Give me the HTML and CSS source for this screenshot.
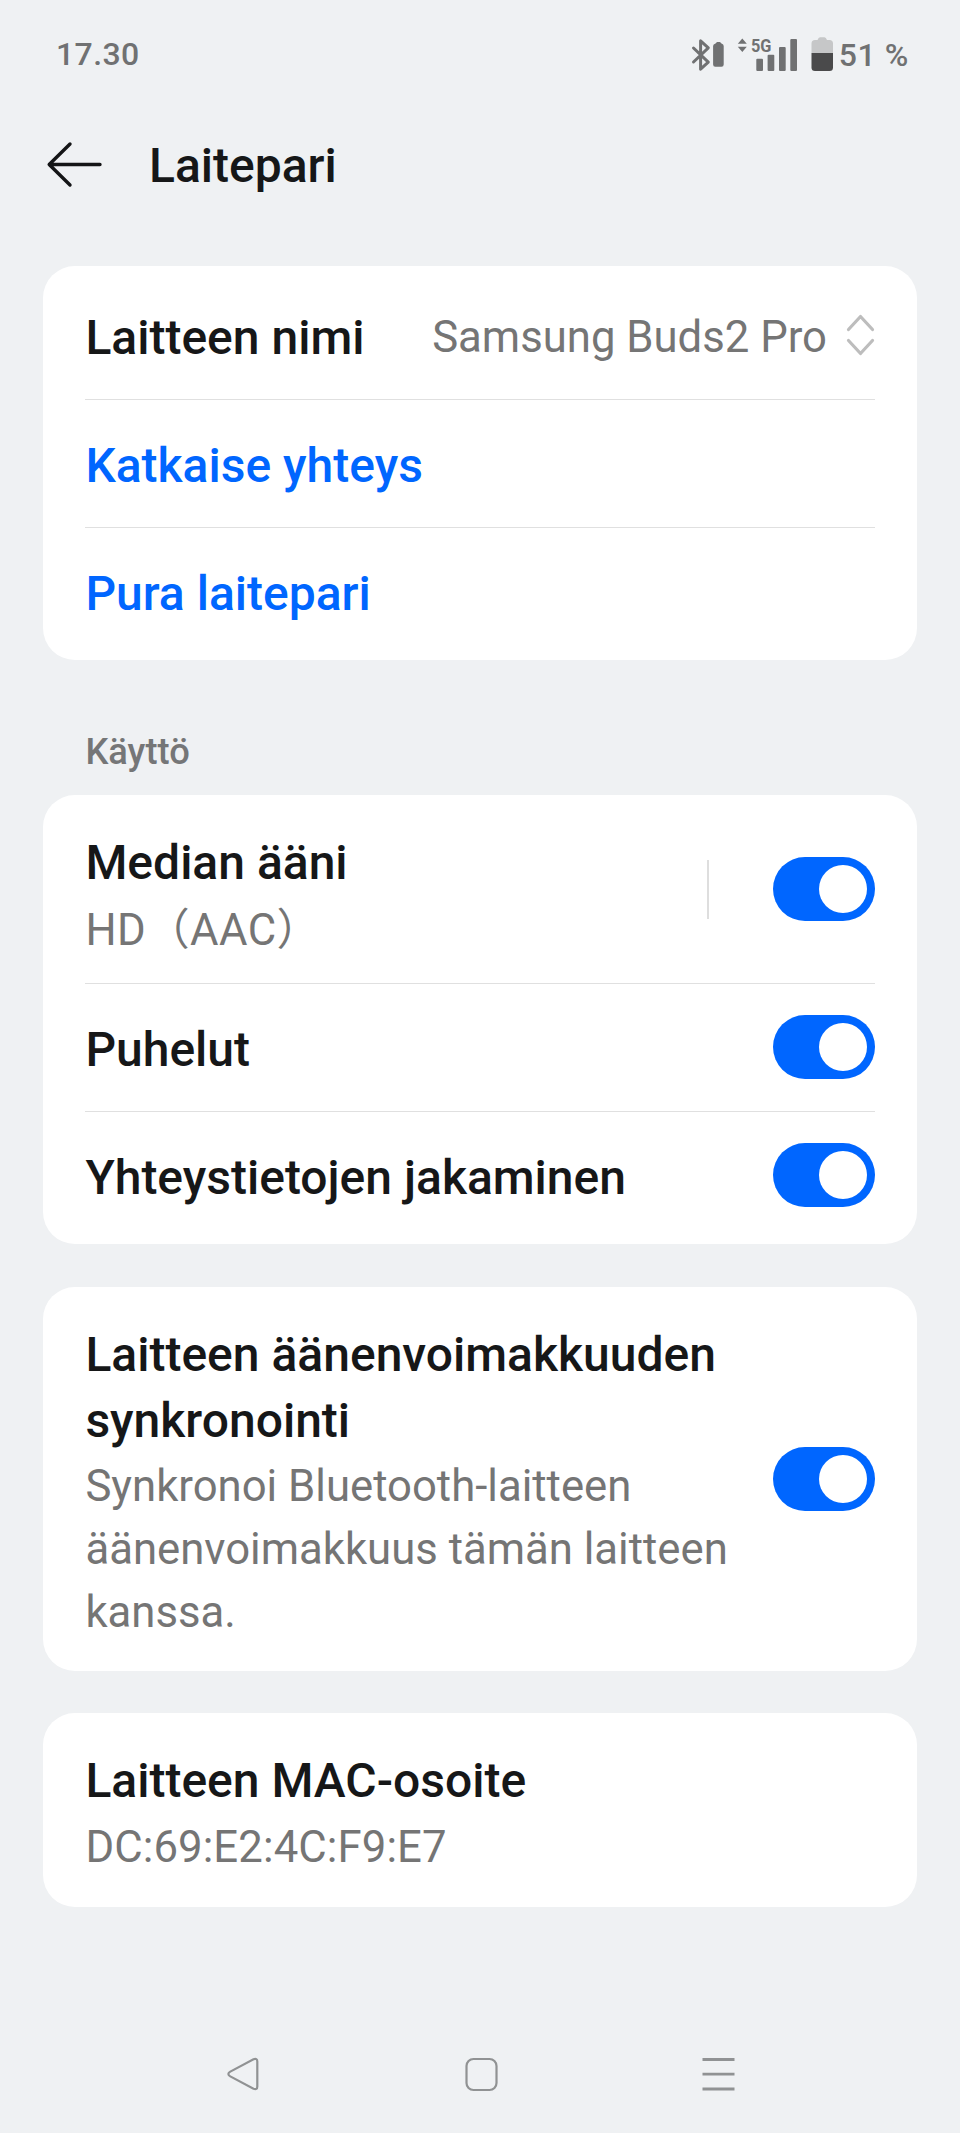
FILE: index.html
```html
<!DOCTYPE html>
<html lang="fi">
<head>
  <meta charset="UTF-8">
  <meta name="viewport" content="width=device-width, initial-scale=1.0">
  <title>Laitepari</title>
  <link rel="stylesheet" href="styles.css">
</head>
<body>
  <div class="status-bar">
    <span class="time">17.30</span>
    <div class="status-right">
      <svg class="status-icons" width="144" height="44" viewBox="690 32 144 44">
        <!-- bluetooth + device battery -->
        <path d="M693.5 48L708.300 62.200L700.600 69.200V40.800L708.300 47.800L693.500 62" fill="none" stroke="#707172" stroke-width="3" stroke-linejoin="round" stroke-linecap="round"/>
        <path d="M715.5 43.5L717 42H720L721.500 43.500Q723.700 44 723.700 46V64.500Q723.700 66.700 721.500 66.700H715.300Q713.100 66.700 713.100 64.500V46Q713.100 44 715.500 43.500Z" fill="#707172"/>
        <!-- mobile network -->
        <path d="M742.300 38.500L746.800 43.800H737.800ZM742.300 52L746.800 46.700H737.800Z" fill="#707172"/>
        <text class="net" x="751" y="52.300" textLength="20.500" lengthAdjust="spacingAndGlyphs">5G</text>
        <g fill="#707172">
          <rect x="756.300" y="58.700" width="6.700" height="12.300" rx="1"/>
          <rect x="767.600" y="54.700" width="6.700" height="16.300" rx="1"/>
          <rect x="779" y="47" width="6.700" height="24" rx="1"/>
          <rect x="790.300" y="39" width="6.700" height="32" rx="1"/>
        </g>
        <!-- phone battery -->
        <path d="M811.500 53V43.500Q811.500 40 815 40H817.500Q818.500 37.300 820 37.300H824.500Q826 37.300 827 40H829.500Q833 40 833 43.500V53Z" fill="#c6c7c8"/>
        <path d="M811.500 53H833V67.500Q833 71 829.500 71H815Q811.500 71 811.500 67.500Z" fill="#4a4a4b"/>
      </svg>
      <span class="percent">51 %</span>
    </div>
  </div>

  <header class="header">
    <svg width="56" height="48" viewBox="0 0 56 48" fill="none" stroke="#141516" stroke-width="3.400" stroke-linecap="round" stroke-linejoin="round">
      <path d="M24 4L3.200 24.500L24 45M3.200 24.500H54"/>
    </svg>
    <h1>Laitepari</h1>
  </header>

  <main>
    <section class="card list">
      <div class="row">
        <span class="title">Laitteen nimi</span>
        <div class="value">
          <span>Samsung Buds2 Pro</span>
          <svg width="29" height="42" viewBox="0 0 29 42" fill="none" stroke="#bdbdbd" stroke-width="3.200" stroke-linecap="round" stroke-linejoin="round">
            <path d="M2.500 15.500L14.500 2.500L26.500 15.500M2.500 26.500L14.500 39.500L26.500 26.500"/>
          </svg>
        </div>
      </div>
      <div class="row"><a class="title link">Katkaise yhteys</a></div>
      <div class="row"><a class="title link">Pura laitepari</a></div>
    </section>

    <h2>Käyttö</h2>

    <section class="card usage">
      <div class="row tall">
        <div class="text">
          <p class="name">Median ääni</p>
          <p class="desc">HD（AAC）</p>
        </div>
        <div class="controls">
          <span class="separator"></span>
          <span class="switch"></span>
        </div>
      </div>
      <div class="row">
        <span class="title">Puhelut</span>
        <span class="switch"></span>
      </div>
      <div class="row">
        <span class="title">Yhteystietojen jakaminen</span>
        <span class="switch"></span>
      </div>
    </section>

    <section class="card sync">
      <div class="text">
        <p class="name">Laitteen äänenvoimakkuuden synkronointi</p>
        <p class="desc">Synkronoi Bluetooth-laitteen äänenvoimakkuus tämän laitteen kanssa.</p>
      </div>
      <span class="switch"></span>
    </section>

    <section class="card mac">
      <div class="text">
        <p class="name">Laitteen MAC-osoite</p>
        <p class="desc">DC:69:E2:4C:F9:E7</p>
      </div>
    </section>
  </main>

  <nav class="nav-bar">
    <svg width="34" height="36" viewBox="0 0 34 36">
      <path d="M3.300 15.600L26.500 3.200Q30.300 1.800 30.300 5.500V30.500Q30.300 34.200 26.500 32.800L3.300 20.400Q-0.600 18 3.300 15.600Z"/>
    </svg>
    <svg width="34" height="36" viewBox="0 0 34 36">
      <rect x="2.500" y="3" width="30" height="31" rx="7"/>
    </svg>
    <svg width="34" height="36" viewBox="0 0 34 36" class="menu">
      <path d="M1.500 3.500H33.500M1.500 18.200H33.500M1.500 33H33.500"/>
    </svg>
  </nav>
</body>
</html>
```
FILE: styles.css
```css
* {
  box-sizing: border-box;
}
body {
  margin: 0;
  height: 2133px;
  display: flex;
  flex-direction: column;
  background: #eff1f3;
  color: #161718;
  font-family: Roboto, "Noto Sans CJK SC", sans-serif;
}
h1, h2, p {
  margin: 0;
  font-weight: 500;
}
svg {
  display: block;
  flex: none;
}

/* status bar */
.status-bar {
  height: 108px;
  padding: 0 51px 0 56px;
  display: flex;
  justify-content: space-between;
  align-items: center;
  color: #707172;
  font-size: 32px;
  font-weight: 500;
}
.time {
  letter-spacing: 0.4px;
}
.status-right {
  display: flex;
  align-items: center;
  gap: 5px;
}
.percent {
  letter-spacing: 0.6px;
  padding-top: 2px;
}
.net {
  font-size: 19px;
  font-weight: 700;
  fill: #707172;
}

/* header */
.header {
  height: 158px;
  padding: 31px 0 0 46px;
  display: flex;
  align-items: flex-start;
  gap: 47px;
}
.header svg {
  margin-top: 1px;
}
h1 {
  font-size: 48px;
  line-height: 54px;
}

/* cards */
main {
  padding: 0 43px;
}
.card {
  background: #fff;
  border-radius: 32px;
  padding: 0 42px 0 42.400px;
}
.list {
  height: 394px;
  padding-top: 5px;
}
.row {
  height: 128px;
  display: flex;
  justify-content: space-between;
  align-items: center;
  border-bottom: 1px solid #e0e0e0;
}
.list .row:first-child {
  height: 129px;
}
.row:last-child {
  height: 127px;
  border-bottom: none;
}
.title {
  font-size: 48px;
  font-weight: 500;
  padding-top: 3px;
}
.list .row:first-child .title {
  padding-top: 5px;
}
.link {
  color: #0066ff;
}
.value {
  display: flex;
  align-items: center;
  gap: 19px;
  color: #757575;
  font-size: 43.700px;
}
.value span {
  padding-top: 3px;
}
h2 {
  color: #757677;
  font-size: 36.300px;
  line-height: 42px;
  padding: 71px 0 22px 42.400px;
}
.usage {
  height: 449px;
}
.row.tall {
  height: 189px;
}
.usage .row:not(.tall) .switch {
  margin-bottom: 1px;
}
.name {
  font-size: 48px;
  line-height: 65.700px;
}
.desc {
  margin-top: 2px;
  color: #757575;
  font-size: 43.700px;
  font-weight: 400;
  line-height: 63px;
}
.row .desc {
  margin-top: 4px;
  letter-spacing: 0.400px;
}
.mac .desc {
  letter-spacing: 0.100px;
}
.controls {
  display: flex;
  align-items: center;
  gap: 64px;
}
.separator {
  width: 2px;
  height: 59px;
  background: #dedede;
}
.switch {
  flex: none;
  width: 102px;
  height: 64px;
  padding: 8px;
  border-radius: 32px;
  background: #0066ff;
}
.switch::after {
  content: "";
  display: block;
  width: 48px;
  height: 48px;
  margin-left: auto;
  border-radius: 50%;
  background: #fff;
}
.sync {
  margin-top: 43px;
  height: 384px;
  display: flex;
  justify-content: space-between;
  align-items: center;
}
.sync .text {
  width: 660px;
  padding-top: 8px;
}
.row .text {
  padding-top: 14px;
}
.mac {
  margin-top: 42px;
  height: 194px;
  padding-top: 35px;
}

/* navigation bar */
.nav-bar {
  margin-top: auto;
  height: 77px;
  padding: 0 225px 0 227px;
  display: flex;
  justify-content: space-between;
  fill: none;
  stroke: #909293;
  stroke-width: 2.200;
}
.menu {
  stroke-width: 2.800;
}
```
